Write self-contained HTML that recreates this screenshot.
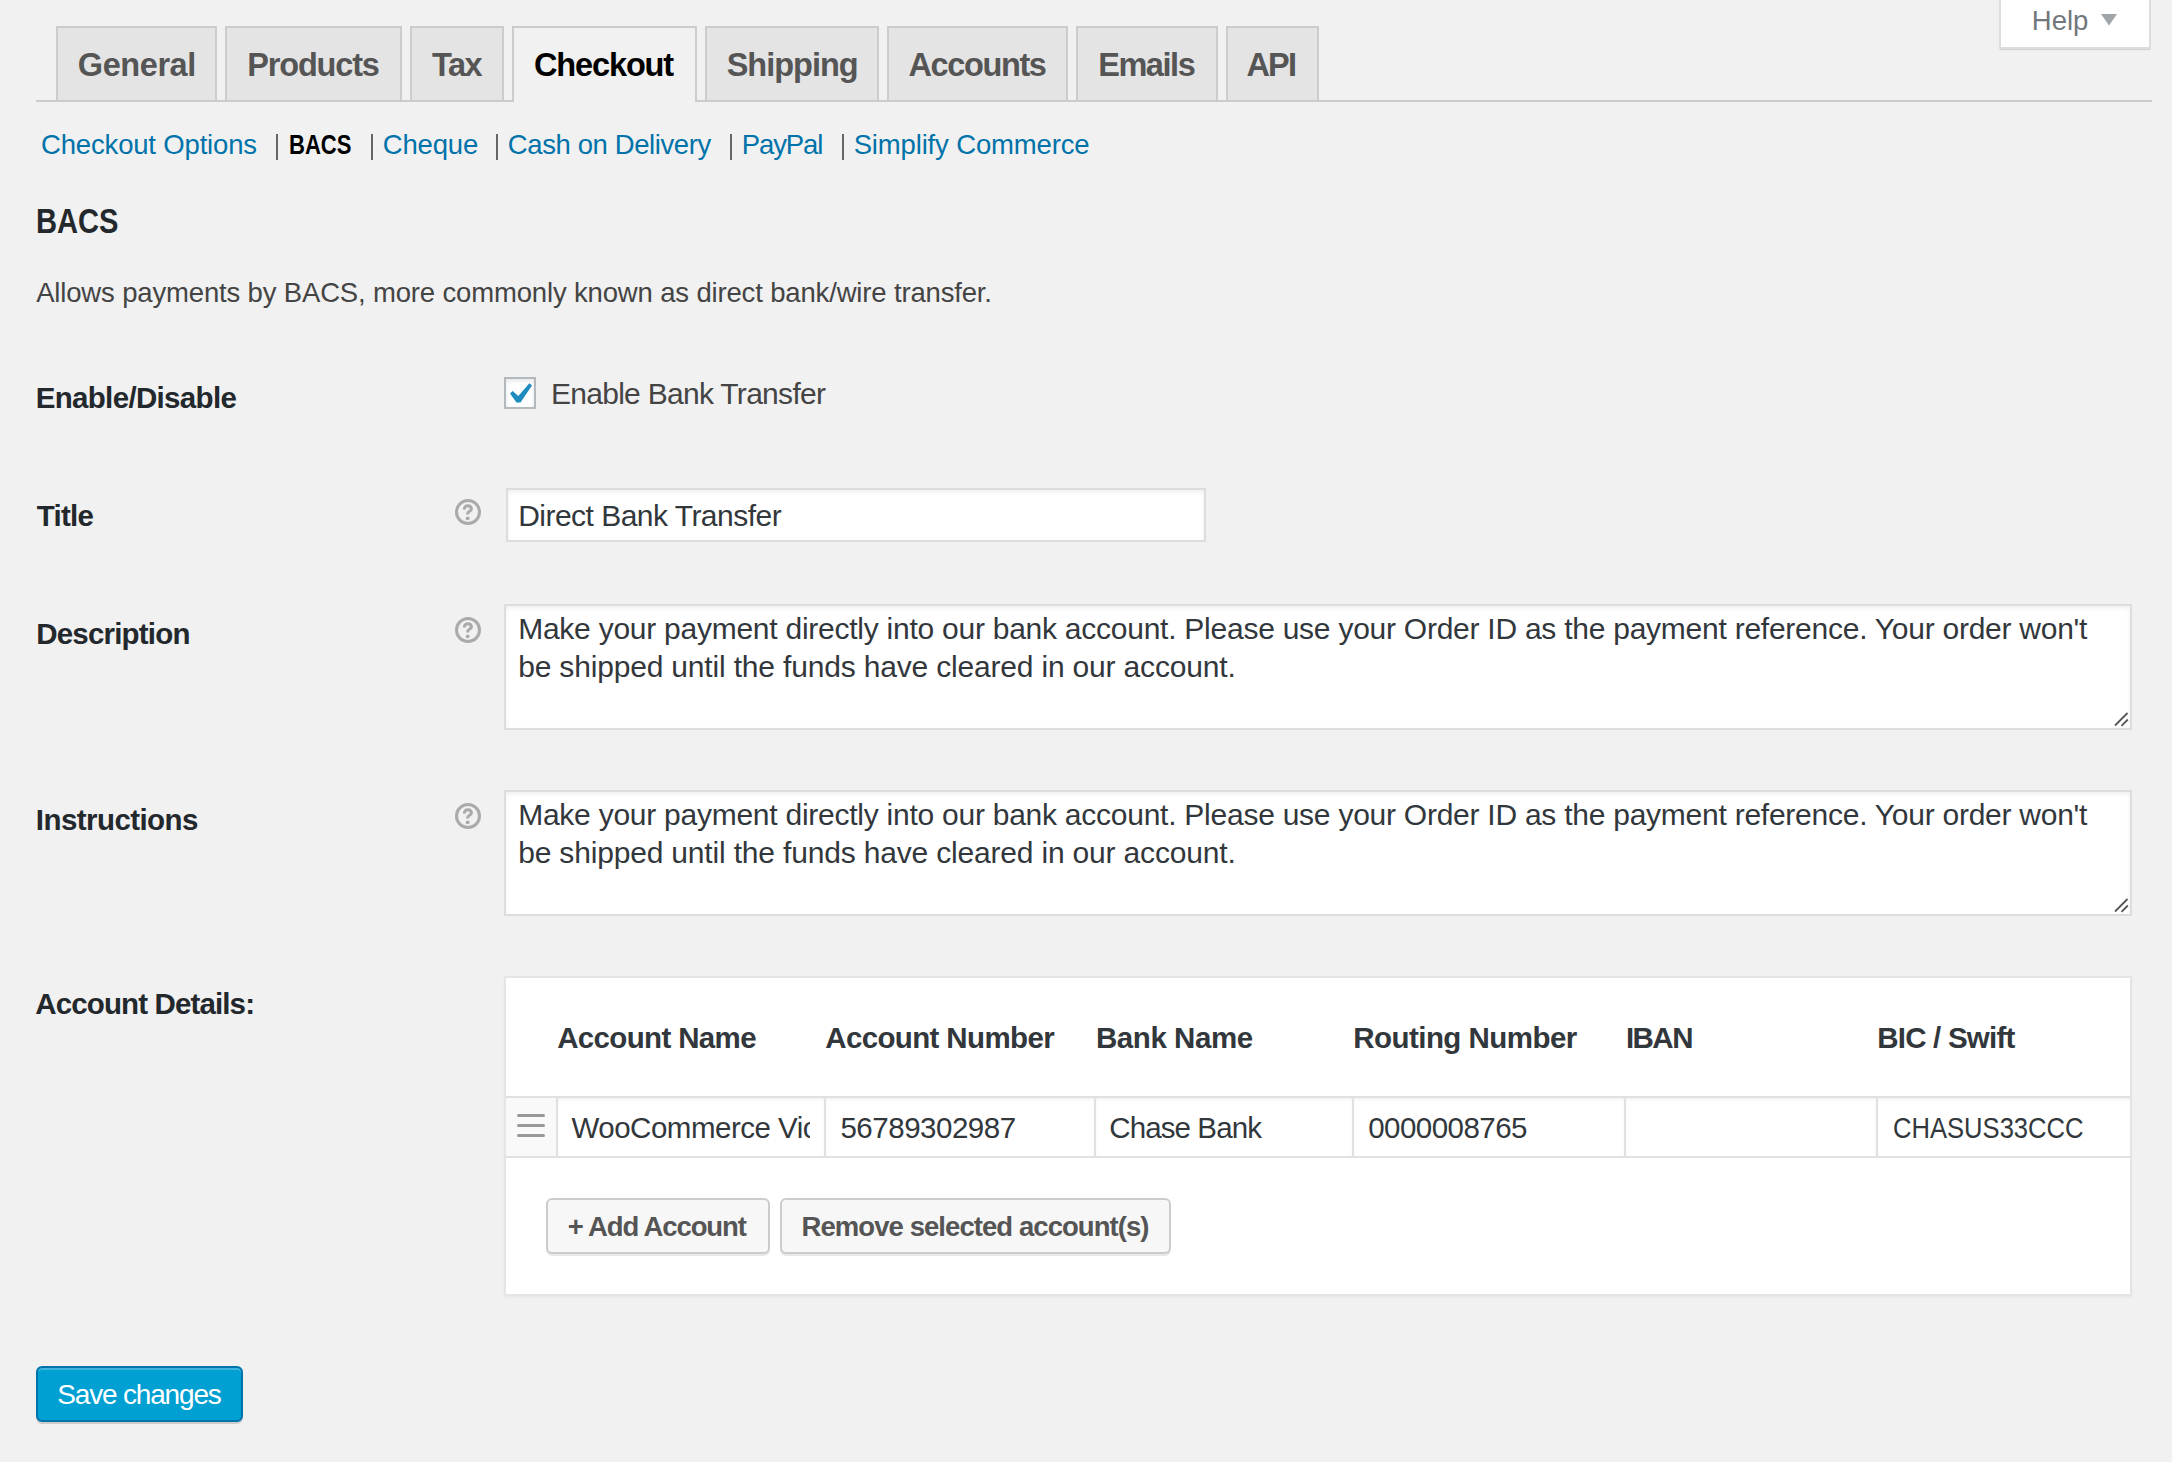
<!DOCTYPE html>
<html><head><meta charset="utf-8"><title>WooCommerce Settings - BACS</title>
<style>
html,body{margin:0;padding:0;}
body{width:2172px;height:1462px;position:relative;overflow:hidden;background:#f1f1f1;font-family:"Liberation Sans", sans-serif;}
</style></head><body>
<div style="position:absolute;left:1999px;top:-2px;width:152px;height:51px;background:#fff;border:2px solid #ddd;border-top:none;box-sizing:border-box;box-shadow:0 2px 1px -1px rgba(0,0,0,.12);"></div>
<div id="help" style="position:absolute;left:2031.85px;top:7.02px;font-size:27.5px;line-height:27.5px;font-weight:400;color:#72777c;letter-spacing:0.000px;white-space:pre;">Help</div>
<svg style="position:absolute;left:2100px;top:13px" width="18" height="14"><polygon points="1,1 17,1 9,12.5" fill="#a0a5aa"/></svg>
<div style="position:absolute;left:36px;top:100px;width:2116px;height:2px;background:#ccc;"></div>
<div style="position:absolute;left:56px;top:26px;width:161px;height:74px;background:#e4e4e4;border:2px solid #ccc;border-bottom:none;box-sizing:border-box;"></div>
<div id="t_general" style="position:absolute;left:77.85px;top:48.89px;font-size:32.5px;line-height:32.5px;font-weight:700;color:#555;letter-spacing:-0.433px;white-space:pre;">General</div>
<div style="position:absolute;left:225px;top:26px;width:177px;height:74px;background:#e4e4e4;border:2px solid #ccc;border-bottom:none;box-sizing:border-box;"></div>
<div id="t_products" style="position:absolute;left:247.25px;top:48.89px;font-size:32.5px;line-height:32.5px;font-weight:700;color:#555;letter-spacing:-1.171px;white-space:pre;">Products</div>
<div style="position:absolute;left:410px;top:26px;width:94px;height:74px;background:#e4e4e4;border:2px solid #ccc;border-bottom:none;box-sizing:border-box;"></div>
<div id="t_tax" style="position:absolute;left:432.05px;top:48.89px;font-size:32.5px;line-height:32.5px;font-weight:700;color:#555;letter-spacing:-1.500px;white-space:pre;">Tax</div>
<div style="position:absolute;left:512px;top:26px;width:185px;height:76px;background:#f1f1f1;border:2px solid #ccc;border-bottom:none;box-sizing:border-box;"></div>
<div id="t_checkout" style="position:absolute;left:534.05px;top:48.89px;font-size:32.5px;line-height:32.5px;font-weight:700;color:#000;letter-spacing:-1.143px;white-space:pre;">Checkout</div>
<div style="position:absolute;left:705px;top:26px;width:174px;height:74px;background:#e4e4e4;border:2px solid #ccc;border-bottom:none;box-sizing:border-box;"></div>
<div id="t_shipping" style="position:absolute;left:726.65px;top:48.89px;font-size:32.5px;line-height:32.5px;font-weight:700;color:#555;letter-spacing:-1.000px;white-space:pre;">Shipping</div>
<div style="position:absolute;left:887px;top:26px;width:181px;height:74px;background:#e4e4e4;border:2px solid #ccc;border-bottom:none;box-sizing:border-box;"></div>
<div id="t_accounts" style="position:absolute;left:908.45px;top:48.89px;font-size:32.5px;line-height:32.5px;font-weight:700;color:#555;letter-spacing:-1.371px;white-space:pre;">Accounts</div>
<div style="position:absolute;left:1076px;top:26px;width:142px;height:74px;background:#e4e4e4;border:2px solid #ccc;border-bottom:none;box-sizing:border-box;"></div>
<div id="t_emails" style="position:absolute;left:1098.15px;top:48.89px;font-size:32.5px;line-height:32.5px;font-weight:700;color:#555;letter-spacing:-1.440px;white-space:pre;">Emails</div>
<div style="position:absolute;left:1226px;top:26px;width:93px;height:74px;background:#e4e4e4;border:2px solid #ccc;border-bottom:none;box-sizing:border-box;"></div>
<div id="t_api" style="position:absolute;left:1246.55px;top:48.89px;font-size:32.5px;line-height:32.5px;font-weight:700;color:#555;letter-spacing:-1.900px;white-space:pre;">API</div>
<div id="n_co" style="position:absolute;left:41.05px;top:130.72px;font-size:27.5px;line-height:27.5px;font-weight:400;color:#0073aa;letter-spacing:-0.173px;white-space:pre;">Checkout Options</div>
<div id="n_bacs" style="position:absolute;left:288.95px;top:130.72px;font-size:27.5px;line-height:27.5px;font-weight:700;color:#000;letter-spacing:0.000px;white-space:pre;transform:scaleX(0.8013);transform-origin:0 0;">BACS</div>
<div id="n_cheque" style="position:absolute;left:382.85px;top:130.72px;font-size:27.5px;line-height:27.5px;font-weight:400;color:#0073aa;letter-spacing:-0.200px;white-space:pre;">Cheque</div>
<div id="n_cod" style="position:absolute;left:507.85px;top:130.72px;font-size:27.5px;line-height:27.5px;font-weight:400;color:#0073aa;letter-spacing:-0.400px;white-space:pre;">Cash on Delivery</div>
<div id="n_paypal" style="position:absolute;left:741.75px;top:130.72px;font-size:27.5px;line-height:27.5px;font-weight:400;color:#0073aa;letter-spacing:-1.120px;white-space:pre;">PayPal</div>
<div id="n_simplify" style="position:absolute;left:853.65px;top:130.72px;font-size:27.5px;line-height:27.5px;font-weight:400;color:#0073aa;letter-spacing:-0.150px;white-space:pre;">Simplify Commerce</div>
<div style="position:absolute;left:275.5px;top:133.5px;width:2px;height:26.5px;background:#666;"></div>
<div style="position:absolute;left:370.5px;top:133.5px;width:2px;height:26.5px;background:#666;"></div>
<div style="position:absolute;left:496.0px;top:133.5px;width:2px;height:26.5px;background:#666;"></div>
<div style="position:absolute;left:729.7px;top:133.5px;width:2px;height:26.5px;background:#666;"></div>
<div style="position:absolute;left:841.5px;top:133.5px;width:2px;height:26.5px;background:#666;"></div>
<div id="h3" style="position:absolute;left:36.37px;top:203.75px;font-size:35.5px;line-height:35.5px;font-weight:700;color:#23282d;letter-spacing:0.000px;white-space:pre;transform:scaleX(0.8205);transform-origin:0 0;">BACS</div>
<div id="para" style="position:absolute;left:36.15px;top:278.52px;font-size:27.5px;line-height:27.5px;font-weight:400;color:#444;letter-spacing:-0.159px;white-space:pre;">Allows payments by BACS, more commonly known as direct bank/wire transfer.</div>
<div id="l_enable" style="position:absolute;left:35.63px;top:382.83px;font-size:29.5px;line-height:29.5px;font-weight:700;color:#23282d;letter-spacing:-0.662px;white-space:pre;">Enable/Disable</div>
<div style="position:absolute;left:504px;top:377px;width:32px;height:32px;background:#fff;border:2px solid #b4b9be;box-sizing:border-box;box-shadow:inset 0 2px 4px rgba(0,0,0,.1);"></div>
<svg style="position:absolute;left:504px;top:377px" width="32" height="32"><polygon points="6,16.5 8.7,13.9 14.3,19 25.4,6.2 28,8.4 16.5,25.6 12.5,25.6" fill="#1e8cbe"/></svg>
<div id="cb_label" style="position:absolute;left:550.90px;top:379.31px;font-size:30px;line-height:30px;font-weight:400;color:#444;letter-spacing:-0.705px;white-space:pre;">Enable Bank Transfer</div>
<div id="l_title" style="position:absolute;left:36.83px;top:500.83px;font-size:29.5px;line-height:29.5px;font-weight:700;color:#23282d;letter-spacing:-0.750px;white-space:pre;">Title</div>
<svg style="position:absolute;left:455px;top:499px" width="26" height="26" viewBox="0 0 26 26"><circle cx="13" cy="13" r="11.5" fill="none" stroke="#aaa" stroke-width="3"/><path d="M9.3,10.4 C9.3,7.9 10.9,6.7 12.8,6.7 C14.9,6.7 16.4,8 16.4,9.9 C16.4,12.1 12.7,12.5 12.7,14.4 L12.7,15.6" fill="none" stroke="#aaa" stroke-width="3"/><circle cx="12.7" cy="19.3" r="1.9" fill="#aaa"/></svg>
<div style="position:absolute;left:506px;top:488px;width:700px;height:54px;background:#fff;border:2px solid #ddd;box-sizing:border-box;box-shadow:inset 0 2px 4px rgba(0,0,0,.07);"></div>
<div id="title_val" style="position:absolute;left:518.20px;top:500.61px;font-size:30px;line-height:30px;font-weight:400;color:#32373c;letter-spacing:-0.526px;white-space:pre;">Direct Bank Transfer</div>
<div id="l_desc" style="position:absolute;left:36.23px;top:618.73px;font-size:29.5px;line-height:29.5px;font-weight:700;color:#23282d;letter-spacing:-0.800px;white-space:pre;">Description</div>
<svg style="position:absolute;left:455px;top:617px" width="26" height="26" viewBox="0 0 26 26"><circle cx="13" cy="13" r="11.5" fill="none" stroke="#aaa" stroke-width="3"/><path d="M9.3,10.4 C9.3,7.9 10.9,6.7 12.8,6.7 C14.9,6.7 16.4,8 16.4,9.9 C16.4,12.1 12.7,12.5 12.7,14.4 L12.7,15.6" fill="none" stroke="#aaa" stroke-width="3"/><circle cx="12.7" cy="19.3" r="1.9" fill="#aaa"/></svg>
<div style="position:absolute;left:504px;top:604px;width:1628px;height:126px;background:#fff;border:2px solid #ddd;box-sizing:border-box;box-shadow:inset 0 2px 4px rgba(0,0,0,.07);"></div>
<div id="d_msg1" style="position:absolute;left:518.20px;top:614.40px;font-size:30px;line-height:30px;font-weight:400;color:#32373c;letter-spacing:-0.250px;white-space:pre;">Make your payment directly into our bank account. Please use your Order ID as the payment reference. Your order won't</div>
<div id="d_msg2" style="position:absolute;left:518.20px;top:652.40px;font-size:30px;line-height:30px;font-weight:400;color:#32373c;letter-spacing:-0.178px;white-space:pre;">be shipped until the funds have cleared in our account.</div>
<svg style="position:absolute;left:2113px;top:711px" width="17" height="17"><line x1="2" y1="14.5" x2="14.5" y2="2" stroke="#555" stroke-width="1.8"/><line x1="8.5" y1="14.8" x2="14.8" y2="8.5" stroke="#555" stroke-width="1.8"/></svg>
<div id="l_instr" style="position:absolute;left:35.83px;top:804.73px;font-size:29.5px;line-height:29.5px;font-weight:700;color:#23282d;letter-spacing:-0.564px;white-space:pre;">Instructions</div>
<svg style="position:absolute;left:455px;top:803px" width="26" height="26" viewBox="0 0 26 26"><circle cx="13" cy="13" r="11.5" fill="none" stroke="#aaa" stroke-width="3"/><path d="M9.3,10.4 C9.3,7.9 10.9,6.7 12.8,6.7 C14.9,6.7 16.4,8 16.4,9.9 C16.4,12.1 12.7,12.5 12.7,14.4 L12.7,15.6" fill="none" stroke="#aaa" stroke-width="3"/><circle cx="12.7" cy="19.3" r="1.9" fill="#aaa"/></svg>
<div style="position:absolute;left:504px;top:790px;width:1628px;height:126px;background:#fff;border:2px solid #ddd;box-sizing:border-box;box-shadow:inset 0 2px 4px rgba(0,0,0,.07);"></div>
<div id="i_msg1" style="position:absolute;left:518.20px;top:800.40px;font-size:30px;line-height:30px;font-weight:400;color:#32373c;letter-spacing:-0.250px;white-space:pre;">Make your payment directly into our bank account. Please use your Order ID as the payment reference. Your order won't</div>
<div id="i_msg2" style="position:absolute;left:518.20px;top:838.40px;font-size:30px;line-height:30px;font-weight:400;color:#32373c;letter-spacing:-0.178px;white-space:pre;">be shipped until the funds have cleared in our account.</div>
<svg style="position:absolute;left:2113px;top:897px" width="17" height="17"><line x1="2" y1="14.5" x2="14.5" y2="2" stroke="#555" stroke-width="1.8"/><line x1="8.5" y1="14.8" x2="14.8" y2="8.5" stroke="#555" stroke-width="1.8"/></svg>
<div id="l_acct" style="position:absolute;left:35.23px;top:988.63px;font-size:29.5px;line-height:29.5px;font-weight:700;color:#23282d;letter-spacing:-0.867px;white-space:pre;">Account Details:</div>
<div style="position:absolute;left:504px;top:976px;width:1628px;height:320px;background:#fff;border:2px solid #e5e5e5;box-sizing:border-box;box-shadow:0 2px 2px rgba(0,0,0,.04);"></div>
<div id="h_name" style="position:absolute;left:557.23px;top:1022.83px;font-size:29.5px;line-height:29.5px;font-weight:700;color:#32373c;letter-spacing:-0.655px;white-space:pre;">Account Name</div>
<div id="h_num" style="position:absolute;left:825.23px;top:1022.83px;font-size:29.5px;line-height:29.5px;font-weight:700;color:#32373c;letter-spacing:-0.631px;white-space:pre;">Account Number</div>
<div id="h_bank" style="position:absolute;left:1096.03px;top:1022.83px;font-size:29.5px;line-height:29.5px;font-weight:700;color:#32373c;letter-spacing:-0.450px;white-space:pre;">Bank Name</div>
<div id="h_routing" style="position:absolute;left:1353.23px;top:1022.83px;font-size:29.5px;line-height:29.5px;font-weight:700;color:#32373c;letter-spacing:-0.538px;white-space:pre;">Routing Number</div>
<div id="h_iban" style="position:absolute;left:1625.93px;top:1022.83px;font-size:29.5px;line-height:29.5px;font-weight:700;color:#32373c;letter-spacing:-1.533px;white-space:pre;">IBAN</div>
<div id="h_bic" style="position:absolute;left:1877.23px;top:1022.83px;font-size:29.5px;line-height:29.5px;font-weight:700;color:#32373c;letter-spacing:-0.780px;white-space:pre;">BIC / Swift</div>
<div style="position:absolute;left:506px;top:1096px;width:1624px;height:2px;background:#e1e1e1;"></div>
<div style="position:absolute;left:506px;top:1156px;width:1624px;height:2px;background:#e1e1e1;"></div>
<div style="position:absolute;left:506px;top:1098px;width:50px;height:58px;background:#f9f9f9;"></div>
<div style="position:absolute;left:556px;top:1098px;width:2px;height:58px;background:#e1e1e1;"></div>
<div style="position:absolute;left:824px;top:1098px;width:2px;height:58px;background:#e1e1e1;"></div>
<div style="position:absolute;left:1094px;top:1098px;width:2px;height:58px;background:#e1e1e1;"></div>
<div style="position:absolute;left:1352px;top:1098px;width:2px;height:58px;background:#e1e1e1;"></div>
<div style="position:absolute;left:1624px;top:1098px;width:2px;height:58px;background:#e1e1e1;"></div>
<div style="position:absolute;left:1876px;top:1098px;width:2px;height:58px;background:#e1e1e1;"></div>
<div style="position:absolute;left:517px;top:1113.8px;width:28px;height:3px;background:#999;border-radius:1.5px;"></div>
<div style="position:absolute;left:517px;top:1123.8px;width:28px;height:3px;background:#999;border-radius:1.5px;"></div>
<div style="position:absolute;left:517px;top:1133.6px;width:28px;height:3px;background:#999;border-radius:1.5px;"></div>
<div style="position:absolute;left:558px;top:1098px;width:266px;height:58px;box-shadow:inset 0 2px 3px rgba(0,0,0,.05);"></div>
<div style="position:absolute;left:826px;top:1098px;width:268px;height:58px;box-shadow:inset 0 2px 3px rgba(0,0,0,.05);"></div>
<div style="position:absolute;left:1096px;top:1098px;width:256px;height:58px;box-shadow:inset 0 2px 3px rgba(0,0,0,.05);"></div>
<div style="position:absolute;left:1354px;top:1098px;width:270px;height:58px;box-shadow:inset 0 2px 3px rgba(0,0,0,.05);"></div>
<div style="position:absolute;left:1626px;top:1098px;width:250px;height:58px;box-shadow:inset 0 2px 3px rgba(0,0,0,.05);"></div>
<div style="position:absolute;left:1878px;top:1098px;width:252px;height:58px;box-shadow:inset 0 2px 3px rgba(0,0,0,.05);"></div>
<div style="position:absolute;left:558px;top:1098px;width:252px;height:58px;overflow:hidden;">
<div id="v_name" style="position:absolute;left:13.50px;top:14.63px;font-size:29.5px;line-height:29.5px;font-weight:400;color:#32373c;letter-spacing:-0.500px;white-space:pre;">WooCommerce Victoria</div>
</div>
<div id="v_num" style="position:absolute;left:840.43px;top:1112.63px;font-size:29.5px;line-height:29.5px;font-weight:400;color:#32373c;letter-spacing:-0.480px;white-space:pre;">56789302987</div>
<div id="v_bank" style="position:absolute;left:1109.23px;top:1112.63px;font-size:29.5px;line-height:29.5px;font-weight:400;color:#32373c;letter-spacing:-0.889px;white-space:pre;">Chase Bank</div>
<div id="v_routing" style="position:absolute;left:1368.23px;top:1112.63px;font-size:29.5px;line-height:29.5px;font-weight:400;color:#32373c;letter-spacing:-0.533px;white-space:pre;">0000008765</div>
<div id="v_bic" style="position:absolute;left:1892.73px;top:1112.63px;font-size:29.5px;line-height:29.5px;font-weight:400;color:#32373c;letter-spacing:0.000px;white-space:pre;transform:scaleX(0.8673);transform-origin:0 0;">CHASUS33CCC</div>
<div style="position:absolute;left:546px;top:1198px;width:224px;height:56px;background:#f7f7f7;border:2px solid #ccc;border-radius:6px;box-sizing:border-box;box-shadow:0 2px 0 rgba(0,0,0,.09);"></div>
<div id="b_add" style="position:absolute;left:567.65px;top:1212.72px;font-size:27.5px;line-height:27.5px;font-weight:700;color:#555;letter-spacing:-1.133px;white-space:pre;">+ Add Account</div>
<div style="position:absolute;left:780px;top:1198px;width:391px;height:56px;background:#f7f7f7;border:2px solid #ccc;border-radius:6px;box-sizing:border-box;box-shadow:0 2px 0 rgba(0,0,0,.09);"></div>
<div id="b_remove" style="position:absolute;left:801.55px;top:1212.72px;font-size:27.5px;line-height:27.5px;font-weight:700;color:#555;letter-spacing:-0.936px;white-space:pre;">Remove selected account(s)</div>
<div style="position:absolute;left:36px;top:1366px;width:207px;height:56px;background:#00a0d2;border:2px solid #0073aa;border-radius:6px;box-sizing:border-box;box-shadow:inset 0 2px 0 rgba(120,200,230,.5),0 2px 0 rgba(0,0,0,.15);"></div>
<div id="save" style="position:absolute;left:57.32px;top:1380.60px;font-size:28px;line-height:28px;font-weight:400;color:#fff;letter-spacing:-1.182px;white-space:pre;">Save changes</div>
</body></html>
